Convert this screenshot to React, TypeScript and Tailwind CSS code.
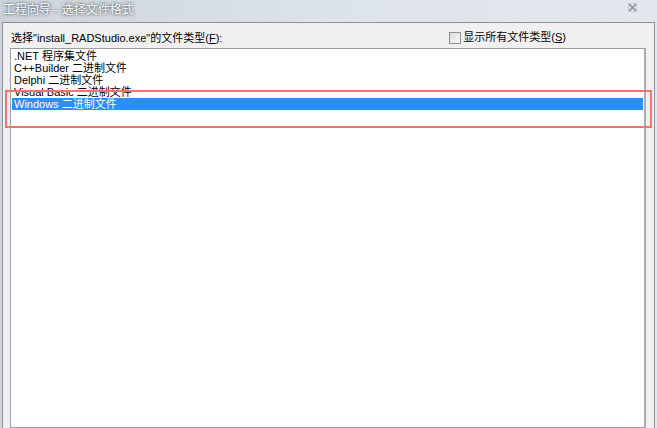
import React from "react"

const items = [".NET 程序集文件", "C++Builder 二进制文件", "Delphi 二进制文件", "Visual Basic 二进制文件", "Windows 二进制文件"]

export default function App() {
  const selected = 4

  return (
    <div
      className="w-[657px] h-[428px] overflow-hidden flex flex-col bg-gradient-to-r from-[#cdd4dc] via-[#dde3ea] to-[#e3e8ee] text-[11px] text-black"
      style={{ fontFamily: '"Liberation Sans", "Noto Sans CJK SC", sans-serif' }}
    >
      {/* title bar */}
      <div className="h-[22px] flex items-start justify-between pl-[3px] pr-[20px]">
        <span className="mt-[3px] text-[12px] leading-[15px] text-white [text-shadow:0_0_2px_#4a4f56,0_0_4px_#6a7078]">
          工程向导 - 选择文件格式
        </span>
        <svg width="9" height="9" viewBox="0 0 9 9" className="mt-[3px]">
          <path d="M1 1 L8 8 M8 1 L1 8" stroke="#8a9098" strokeWidth="1.6" />
          <rect x="0.5" y="0.5" width="8" height="8" fill="none" stroke="#b4bac2" strokeWidth="0.6" />
        </svg>
      </div>

      {/* client area */}
      <div className="flex-1 mx-[2px] border-t border-l border-r border-[#8c9298] bg-[#f0f0f0] flex flex-col pl-[7px] pr-[8px]">
        <div className="h-[25px] flex items-end justify-between pb-[3px]">
          <span className="leading-[13px] pl-[1px]">选择"install_RADStudio.exe"的文件类型(<span className="underline">F</span>):</span>
          <label className="flex items-center gap-[2px] mr-[80px] mb-[1px]">
            <span className="w-[12px] h-[12px] border border-[#8e8f8f] bg-gradient-to-br from-[#dcdcdc] to-[#f8f8f8]" />
            <span className="leading-[13px]">显示所有文件类型(<span className="underline">S</span>)</span>
          </label>
        </div>

        <div className="relative flex-1 border border-[#9a9ea6] border-r-2 border-r-[#a9acb4] bg-white pt-[1px] px-[1px]">
          {items.map((it, i) => (
            <div
              key={it}
              className={
                i === selected
                  ? "h-[12px] leading-[12px] pl-[2px] bg-[#2a8ffb] text-white"
                  : "h-[12px] leading-[12px] pl-[2px]"
              }
            >
              {it}
            </div>
          ))}
          {/* red highlight box */}
          <div className="absolute left-[-6px] right-[-8px] top-[41px] h-[38px] border-2 border-[#f47272]" />
        </div>
      </div>
    </div>
  )
}
